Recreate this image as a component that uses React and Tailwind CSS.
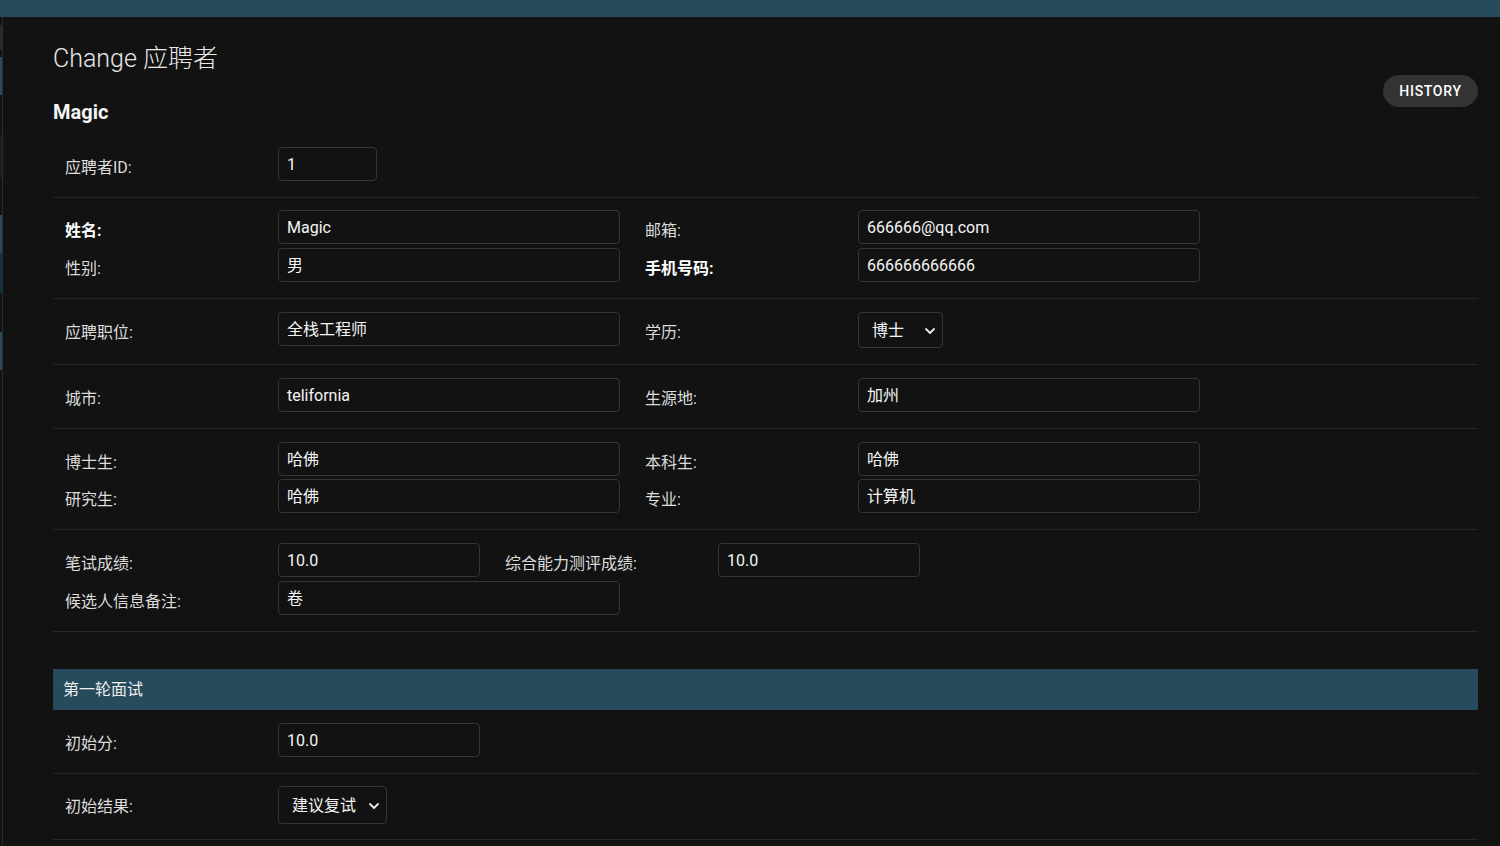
import { ChevronDown } from "lucide-react";

const font = { fontFamily: 'Roboto, "Noto Sans CJK SC", sans-serif' };

function Input({ w, value }) {
  return (
    <div
      className={`h-[34px] rounded-[4px] border border-[#353535] px-2 pt-px flex items-center text-base text-[#f5f5f5] ${w}`}
    >
      {value}
    </div>
  );
}

function Select({ w, h, value }) {
  return (
    <div
      className={`${w} ${h} rounded-[4px] border border-[#353535] pl-[13px] pr-[4px] pt-px flex items-center justify-between text-base text-[#f5f5f5]`}
    >
      <span>{value}</span>
      <ChevronDown size={16} strokeWidth={2.75} className="text-[#e8e8e8]" />
    </div>
  );
}

function Field({ label, bold, children }) {
  return (
    <div className="flex items-start mr-[25px]">
      <div
        className={`w-[213px] pt-[11px] leading-5 text-base ${
          bold ? "font-bold text-white" : "text-[#dcdcdc]"
        }`}
      >
        {label}
      </div>
      {children}
    </div>
  );
}

function Row({ pt = "pt-[13px]", pb = "pb-[16px]", children }) {
  return (
    <div className={`border-b border-[#272727] pl-3 ${pt} ${pb} flex flex-col`}>
      {children}
    </div>
  );
}

function Line({ gap = "", children }) {
  return <div className={`flex ${gap}`}>{children}</div>;
}

export default function App() {
  return (
    <div className="min-h-screen bg-[#121212] text-[#eeeeee]" style={font}>
      <div className="h-[17px] bg-[#264b5d]" />
      <div className="flex">
        <div className="w-[3px] border-r border-[#2b2b2b] flex flex-col shrink-0">
          <div className="h-[8px]" />
          <div className="h-[25px] w-[2px] bg-[#2a2a2a]" />
          <div className="h-[7px]" />
          <div className="h-[38px] w-[2px] bg-[#264b5d]" />
          <div className="h-[40px]" />
          <div className="h-[43px] w-[2px] bg-[#1c1c1c]" />
          <div className="h-[37px]" />
          <div className="h-[38px] w-[2px] bg-[#264b5d]" />
          <div className="h-[40px] w-[2px] bg-[#0c3540]" />
          <div className="h-[39px]" />
          <div className="h-[38px] w-[2px] bg-[#264b5d]" />
        </div>

        <div className="flex-1 pl-[50px] pr-[22px] pt-[27px] pb-10">
          <div className="flex justify-between items-start">
            <div>
              <h1 className="text-[25px] leading-[30px] font-light text-[#e8e8e8]">
                Change 应聘者
              </h1>
              <h2 className="mt-[26px] text-xl leading-6 font-bold text-[#f5f5f5]">
                Magic
              </h2>
            </div>
            <button className="mt-[31px] h-[32px] w-[95px] rounded-full bg-[#333333] text-[14px] font-medium tracking-[0.7px] text-white">
              HISTORY
            </button>
          </div>

          <div className="mt-[11px]">
            <Row pt="pt-[12px]">
              <Line>
                <Field label="应聘者ID:">
                  <Input w="w-[99px]" value="1" />
                </Field>
              </Line>
            </Row>

            <Row pt="pt-[12px]">
              <Line>
                <Field label="姓名:" bold>
                  <Input w="w-[342px]" value="Magic" />
                </Field>
                <Field label="邮箱:">
                  <Input w="w-[342px]" value="666666@qq.com" />
                </Field>
              </Line>
              <Line gap="mt-[4px]">
                <Field label="性别:">
                  <Input w="w-[342px]" value="男" />
                </Field>
                <Field label="手机号码:" bold>
                  <Input w="w-[342px]" value="666666666666" />
                </Field>
              </Line>
            </Row>

            <Row>
              <Line>
                <Field label="应聘职位:">
                  <Input w="w-[342px]" value="全栈工程师" />
                </Field>
                <Field label="学历:">
                  <Select w="w-[85px]" h="h-[36px]" value="博士" />
                </Field>
              </Line>
            </Row>

            <Row>
              <Line>
                <Field label="城市:">
                  <Input w="w-[342px]" value="telifornia" />
                </Field>
                <Field label="生源地:">
                  <Input w="w-[342px]" value="加州" />
                </Field>
              </Line>
            </Row>

            <Row>
              <Line>
                <Field label="博士生:">
                  <Input w="w-[342px]" value="哈佛" />
                </Field>
                <Field label="本科生:">
                  <Input w="w-[342px]" value="哈佛" />
                </Field>
              </Line>
              <Line gap="mt-[3px]">
                <Field label="研究生:">
                  <Input w="w-[342px]" value="哈佛" />
                </Field>
                <Field label="专业:">
                  <Input w="w-[342px]" value="计算机" />
                </Field>
              </Line>
            </Row>

            <Row>
              <Line>
                <Field label="笔试成绩:">
                  <Input w="w-[202px]" value="10.0" />
                </Field>
                <Field label="综合能力测评成绩:">
                  <Input w="w-[202px]" value="10.0" />
                </Field>
              </Line>
              <Line gap="mt-[4px]">
                <Field label="候选人信息备注:">
                  <Input w="w-[342px]" value="卷" />
                </Field>
              </Line>
            </Row>
          </div>

          <div className="mt-[37px]">
            <div className="h-[41px] bg-[#264b5d] pl-[10px] flex items-center text-base text-[#eeeeee]">
              第一轮面试
            </div>
            <Row>
              <Line>
                <Field label="初始分:">
                  <Input w="w-[202px]" value="10.0" />
                </Field>
              </Line>
            </Row>
            <Row pt="pt-[12px]" pb="pb-[15px]">
              <Line>
                <Field label="初始结果:">
                  <Select w="w-[109px]" h="h-[38px]" value="建议复试" />
                </Field>
              </Line>
            </Row>
          </div>
        </div>
      </div>
    </div>
  );
}
